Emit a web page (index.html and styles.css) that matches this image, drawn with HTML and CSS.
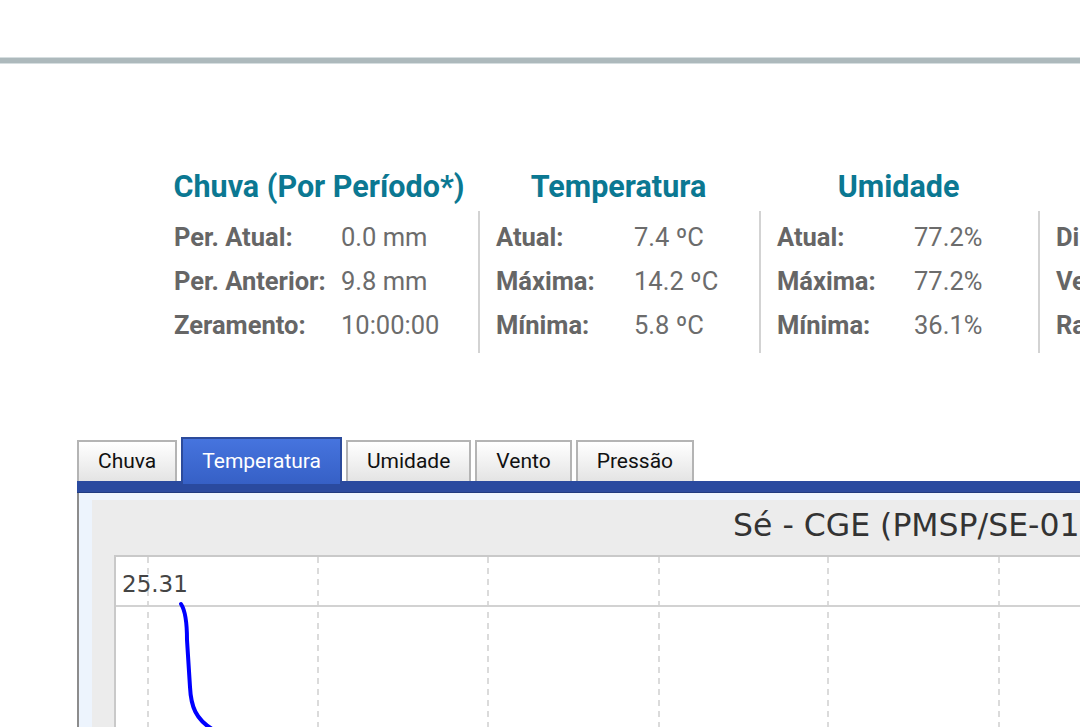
FILE: index.html
```html
<!DOCTYPE html>
<html lang="pt-BR">
<head>
    <meta charset="UTF-8">
    <meta name="viewport" content="width=device-width, initial-scale=1.0">
    <title>Estação Sé - CGE</title>
    <link rel="stylesheet" href="styles.css">
</head>
<body>
    <div class="topbar"></div>
    <div class="rule"></div>

    <div class="stats">
        <div class="col col-chuva">
            <h2>Chuva (Por Período*)</h2>
            <div class="col-body">
                <div class="row"><span class="k">Per. Atual:</span><span class="v">0.0 mm</span></div>
                <div class="row"><span class="k">Per. Anterior:</span><span class="v">9.8 mm</span></div>
                <div class="row"><span class="k">Zeramento:</span><span class="v">10:00:00</span></div>
            </div>
        </div>
        <div class="col col-temp">
            <h2>Temperatura</h2>
            <div class="col-body">
                <div class="row"><span class="k">Atual:</span><span class="v">7.4 ºC</span></div>
                <div class="row"><span class="k">Máxima:</span><span class="v">14.2 ºC</span></div>
                <div class="row"><span class="k">Mínima:</span><span class="v">5.8 ºC</span></div>
            </div>
        </div>
        <div class="col col-umid">
            <h2>Umidade</h2>
            <div class="col-body">
                <div class="row"><span class="k">Atual:</span><span class="v">77.2%</span></div>
                <div class="row"><span class="k">Máxima:</span><span class="v">77.2%</span></div>
                <div class="row"><span class="k">Mínima:</span><span class="v">36.1%</span></div>
            </div>
        </div>
        <div class="col col-vento">
            <h2>Vento</h2>
            <div class="col-body">
                <div class="row"><span class="k">Direção:</span><span class="v">SE</span></div>
                <div class="row"><span class="k">Velocidade:</span><span class="v">4.2 km/h</span></div>
                <div class="row"><span class="k">Rajada:</span><span class="v">12.6 km/h</span></div>
            </div>
        </div>
    </div>

    <div class="graficos">
        <ul class="tabs">
            <li class="tab">Chuva</li>
            <li class="tab active">Temperatura</li>
            <li class="tab">Umidade</li>
            <li class="tab">Vento</li>
            <li class="tab">Pressão</li>
        </ul>
        <div class="tab-bar"></div>
        <div class="panel">
            <div class="chart">
                <div class="chart-title">Sé - CGE (PMSP/SE-01)</div>
                <div class="plot">
                    <svg width="1000" height="200" viewBox="0 0 1000 200">
                        <g stroke="#cfcfcf" stroke-width="1.5" stroke-dasharray="6 5">
                            <line x1="32" y1="0" x2="32" y2="200"/>
                            <line x1="202" y1="0" x2="202" y2="200"/>
                            <line x1="372" y1="0" x2="372" y2="200"/>
                            <line x1="543" y1="0" x2="543" y2="200"/>
                            <line x1="712" y1="0" x2="712" y2="200"/>
                            <line x1="883" y1="0" x2="883" y2="200"/>
                        </g>
                        <line x1="0" y1="49" x2="1000" y2="49" stroke="#d2d2d2" stroke-width="2"/>
                        <text x="6" y="35" class="axis-label">25.31</text>
                        <path d="M65 47 C69 53, 71 62, 71 83 L74 130 C75 150, 80 162, 96 172" fill="none" stroke="#0000ff" stroke-width="4" stroke-linecap="round"/>
                    </svg>
                </div>
            </div>
        </div>
    </div>
</body>
</html>
```

FILE: styles.css
```css
html, body {
    overflow: hidden;
}
body {
    margin: 0;
    background: #fff;
    font-family: Roboto, "Liberation Sans", sans-serif;
}
.topbar {
    height: 57px;
}
.rule {
    height: 5px;
    background-color: #adb9bc;
    border-top: 1px solid #d6dee0;
    border-bottom: 1px solid #d6dee0;
}

/* resumo */
.stats {
    display: flex;
    margin-top: 106px;
    padding-left: 160px;
    white-space: nowrap;
}
.col {
    flex: none;
}
.col-chuva { width: 318px; }
.col-temp { width: 281px; }
.col-umid { width: 279px; }
.col-vento { width: 300px; }
.col h2 {
    margin: 0 0 7px 0;
    font-size: 30.5px;
    line-height: 34px;
    font-weight: 700;
    color: #0b7892;
    text-align: center;
}
.col-body {
    padding: 4px 0 6px 16px;
    border-left: 2px solid #d3d3d3;
}
.col-chuva .col-body {
    border-left: 0;
    padding-left: 14px;
}
.row {
    display: flex;
    height: 44px;
    line-height: 44px;
    font-size: 25.5px;
    color: #666;
}
.row .k {
    font-weight: 700;
    width: 138px;
}
.row .v {
    color: #6c6c6c;
}
.col-chuva .row .k { width: 167px; }
.col-umid .row .k { width: 137px; }

/* graficos */
.graficos {
    margin: 84px 0 0 77px;
}
.tabs {
    display: flex;
    align-items: flex-end;
    gap: 4px;
    list-style: none;
    margin: 0;
    padding: 0;
}
.tab {
    box-sizing: border-box;
    height: 41px;
    padding: 0 19px;
    border: 2px solid #b4b4b4;
    border-bottom: 0;
    line-height: 39px;
    font-size: 21px;
    color: #111;
    background: linear-gradient(#ffffff, #e4e4e4);
    cursor: pointer;
}
.tab.active {
    position: relative;
    z-index: 1;
    height: 47px;
    margin-bottom: -3px;
    line-height: 45px;
    color: #fff;
    border-color: #2c4b9b;
    background: linear-gradient(#4674de, #3660c6);
}
.tab-bar {
    height: 11px;
    background-color: #2a4a9f;
    border-bottom: 1px solid #1f3a80;
}
.panel {
    height: 300px;
    padding: 7px 0 0 13px;
    border-left: 2px solid #8c8c8c;
    background-color: #edf4fd;
}
.chart {
    width: 1100px;
    height: 300px;
    padding: 7px 0 0 22px;
    background-color: #ececec;
}
.chart-title {
    padding-left: 619px;
    font-family: "DejaVu Sans", sans-serif;
    font-size: 31.5px;
    line-height: 36px;
    color: #333;
    white-space: nowrap;
}
.plot {
    width: 1000px;
    height: 200px;
    margin-top: 12px;
    border: 2px solid #c9c9c9;
    background-color: #fff;
}
.plot svg {
    display: block;
}
.axis-label {
    font-family: "DejaVu Sans", sans-serif;
    font-size: 23px;
    fill: #444;
}
```
